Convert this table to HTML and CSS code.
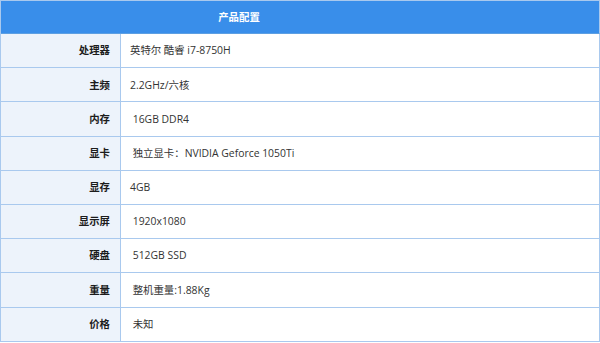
FILE: index.html
```html
<!DOCTYPE html>
<html lang="zh">
<head>
<meta charset="utf-8">
<title>产品配置</title>
<link rel="stylesheet" href="styles.css">
</head>
<body>
<table class="spec">
  <colgroup>
    <col class="col-label">
    <col class="col-value">
  </colgroup>
  <thead>
    <tr><th class="head" colspan="2">产品配置</th></tr>
  </thead>
  <tbody>
    <tr><th class="label">处理器</th><td class="value">英特尔 酷睿 i7-8750H</td></tr>
    <tr><th class="label">主频</th><td class="value">2.2GHz/六核</td></tr>
    <tr><th class="label">内存</th><td class="value">&nbsp;16GB DDR4</td></tr>
    <tr><th class="label">显卡</th><td class="value">&nbsp;独立显卡：NVIDIA Geforce 1050Ti</td></tr>
    <tr><th class="label">显存</th><td class="value">4GB</td></tr>
    <tr><th class="label">显示屏</th><td class="value">&nbsp;1920x1080</td></tr>
    <tr><th class="label">硬盘</th><td class="value">&nbsp;512GB SSD</td></tr>
    <tr><th class="label">重量</th><td class="value">&nbsp;整机重量:1.88Kg</td></tr>
    <tr><th class="label">价格</th><td class="value">&nbsp;未知</td></tr>
  </tbody>
</table>
</body>
</html>
```
FILE: styles.css
```css
html, body {
  margin: 0;
  padding: 0;
  background: #ffffff;
}

body {
  font-family: "Open Sans", "Noto Sans CJK SC", sans-serif;
  font-size: 10.4px;
  color: #333333;
}

.spec {
  width: 600px;
  border-collapse: separate;
  border-spacing: 0;
  border-top: 1px solid #a9c9ee;
  border-left: 1px solid #a9c9ee;
  table-layout: fixed;
}

.col-label {
  width: 120px;
}

.spec th,
.spec td {
  padding: 0;
  border-right: 1px solid #a9c9ee;
  border-bottom: 1px solid #a9c9ee;
  height: 33.2px;
  vertical-align: middle;
  line-height: 1.2;
}

.spec .head {
  height: 32px;
  background: #398eea;
  color: #ffffff;
  font-weight: bold;
  text-align: center;
  padding-right: 122px;
  border-bottom-color: #5d9fe2;
}

.spec .label {
  padding-right: 10px;
  background: #edf3fb;
  text-align: right;
  font-weight: bold;
  color: #1c1c1c;
}

.spec .value {
  padding-left: 9px;
  text-align: left;
  color: #333333;
}
```
